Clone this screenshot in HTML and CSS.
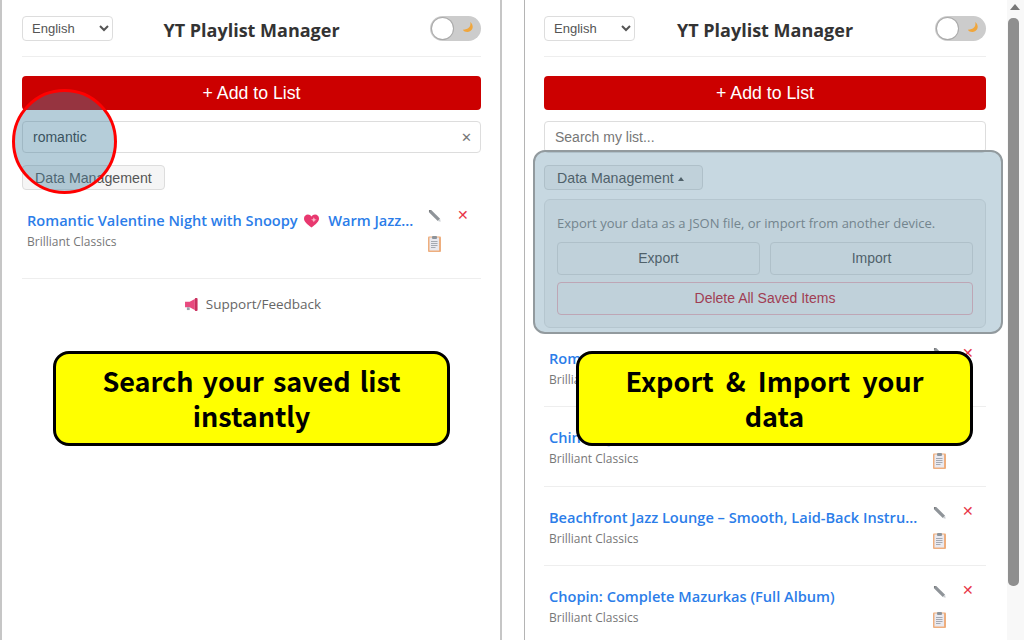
FILE: index.html
```html
<!DOCTYPE html>
<html lang="en">
<head>
<meta charset="UTF-8" />
<title>YT Playlist Manager</title>
<link rel="stylesheet" href="styles.css">
</head>
<body>
  <svg class="defs" width="0" height="0" aria-hidden="true">
    <symbol id="i-pencil" viewBox="0 0 14 14">
      <path d="M1 1.5 L3.5 1 L13 10.5 L10.5 13 L1 3.5 Z" fill="#8f9499"/>
      <path d="M1 1.5 L3 1 L1.4 3 Z" fill="#555"/>
      <path d="M10.5 13 L13 10.5 L13.6 13.6 Z" fill="#c8ccd0"/>
    </symbol>
    <symbol id="i-clip" viewBox="0 0 13 16">
      <rect x="0" y="0.5" width="13" height="15.5" rx="1" fill="#eeae7e"/>
      <rect x="1.5" y="1.5" width="9.5" height="13" fill="#e9e9f0"/>
      <rect x="4" y="0" width="5" height="3" rx="1" fill="#8d949b"/>
      <path d="M3 5.5h6.5M3 7.5h6.5M3 9.5h6.5M3 11.5h4.5" stroke="#a4a9b2" stroke-width="1"/>
    </symbol>
  </svg>

  <!-- SEARCH SHOT -->
  <section class="panel panel-left">
    <header class="top">
      <select class="lang"><option>English</option></select>
      <h1>YT Playlist Manager</h1>
      <div class="toggle">
        <span class="knob"></span>
        <svg class="moon" viewBox="0 0 14 14"><path d="M10 1 C11 6 8 9 2 9.5 C4 13 11 13 12.5 7.5 C13 5 12 2.5 10 1 Z" fill="#f0a63c"/></svg>
      </div>
    </header>
    <button class="add">+ Add to List</button>
    <div class="search">
      <input type="text" value="romantic" placeholder="Search my list..." />
      <span class="clear">&#10005;</span>
    </div>
    <button class="data-btn">Data Management</button>

    <div class="list">
      <div class="item">
        <div class="info">
          <a class="name">Romantic Valentine Night with Snoopy <svg class="emoji" viewBox="0 0 16 14"><path d="M8 14 C3 10 0 7.5 0 4.2 C0 1.8 1.9 0 4.2 0 C5.8 0 7.2 .8 8 2.2 C8.8 .8 10.2 0 11.8 0 C14.1 0 16 1.8 16 4.2 C16 7.5 13 10 8 14 Z" fill="#e8386f"/><path d="M10.5 3 l1 2 2 .6 -2 .8 -1 2 -1-2 -2-.8 2-.6 Z" fill="#fbb9c9"/></svg> Warm Jazz...</a>
          <div class="channel">Brilliant Classics</div>
        </div>
        <div class="actions">
          <svg class="ic-edit"><use href="#i-pencil"/></svg>
          <span class="del">&#10005;</span>
          <svg class="ic-clip"><use href="#i-clip"/></svg>
        </div>
      </div>
    </div>

    <div class="support">
      <svg class="horn" viewBox="0 0 15 14"><path d="M0 4h5L10.5 1v12L5 10H0Z" fill="#e84a7f"/><rect x="10.5" y="0" width="3" height="14" rx="1" fill="#c9305f"/><rect x="2" y="10" width="3" height="3" fill="#9aa3ad"/></svg>
      <span>Support/Feedback</span>
    </div>

    <div class="spot-circle"></div>
    <div class="callout callout-left">Search your saved list instantly</div>
  </section>

  <!-- EXPORT SHOT -->
  <section class="panel panel-right">
    <header class="top">
      <select class="lang"><option>English</option></select>
      <h1>YT Playlist Manager</h1>
      <div class="toggle">
        <span class="knob"></span>
        <svg class="moon" viewBox="0 0 14 14"><path d="M10 1 C11 6 8 9 2 9.5 C4 13 11 13 12.5 7.5 C13 5 12 2.5 10 1 Z" fill="#f0a63c"/></svg>
      </div>
    </header>
    <button class="add">+ Add to List</button>
    <div class="search">
      <input type="text" placeholder="Search my list..." />
    </div>
    <button class="data-btn">Data Management <span class="caret"></span></button>

    <div class="data-box">
      <p>Export your data as a JSON file, or import from another device.</p>
      <div class="data-row">
        <button>Export</button>
        <button>Import</button>
      </div>
      <button class="danger">Delete All Saved Items</button>
    </div>

    <div class="list">
      <div class="item">
        <div class="info">
          <a class="name">Romantic Valentine Night with Snoopy</a>
          <div class="channel">Brilliant Classics</div>
        </div>
        <div class="actions">
          <svg class="ic-edit"><use href="#i-pencil"/></svg>
          <span class="del">&#10005;</span>
          <svg class="ic-clip"><use href="#i-clip"/></svg>
        </div>
      </div>
      <div class="item">
        <div class="info">
          <a class="name">Chinese Jazz Lounge</a>
          <div class="channel">Brilliant Classics</div>
        </div>
        <div class="actions">
          <svg class="ic-edit"><use href="#i-pencil"/></svg>
          <span class="del">&#10005;</span>
          <svg class="ic-clip"><use href="#i-clip"/></svg>
        </div>
      </div>
      <div class="item">
        <div class="info">
          <a class="name">Beachfront Jazz Lounge – Smooth, Laid-Back Instru...</a>
          <div class="channel">Brilliant Classics</div>
        </div>
        <div class="actions">
          <svg class="ic-edit"><use href="#i-pencil"/></svg>
          <span class="del">&#10005;</span>
          <svg class="ic-clip"><use href="#i-clip"/></svg>
        </div>
      </div>
      <div class="item">
        <div class="info">
          <a class="name">Chopin: Complete Mazurkas (Full Album)</a>
          <div class="channel">Brilliant Classics</div>
        </div>
        <div class="actions">
          <svg class="ic-edit"><use href="#i-pencil"/></svg>
          <span class="del">&#10005;</span>
          <svg class="ic-clip"><use href="#i-clip"/></svg>
        </div>
      </div>
    </div>

    <div class="spot-box"></div>
    <div class="callout callout-right">Export &amp; Import your data</div>
  </section>

  <div class="scrollbar">
    <span class="arrow"></span>
    <span class="thumb"></span>
  </div>
</body>
</html>
```

FILE: styles.css
```css
:root {
  --ui: 'Open Sans', 'Noto Sans', sans-serif;
  --arial: 'Liberation Sans', Arial, sans-serif;
  --spot: rgba(70, 125, 155, 0.3);
}

* {
  box-sizing: border-box;
}

html,
body {
  margin: 0;
  height: 640px;
  overflow: hidden;
  background: #fff;
  font-family: var(--ui);
}

body {
  display: flex;
}

.defs {
  position: absolute;
}

/* ------------ PANELS ------------- */
.panel {
  position: relative;
  height: 640px;
  padding-top: 16px;
  overflow: hidden;
}
.panel-left {
  width: 502px;
  padding-left: 20px;
  padding-right: 19px;
  border-left: 2px solid #c6c6c6;
  border-right: 2px solid #c6c6c6;
}
.panel-right {
  width: 483px;
  margin-left: 22px;
  padding-left: 19px;
  padding-right: 21px;
  border-left: 1px solid #b4b4b4;
}

.top {
  display: grid;
  grid-template-columns: 1fr auto 1fr;
  align-items: center;
  height: 41px;
  padding-bottom: 15px;
  border-bottom: 1px solid #eee;
  margin-bottom: 19px;
}
.top h1 {
  margin: 3px 0 0;
  font-size: 18px;
  font-weight: 700;
  color: #333;
  line-height: 22px;
}
.lang {
  width: 91px;
  height: 25px;
  padding: 0 5px;
  background: #fff;
  border: 1px solid #ddd;
  border-radius: 4px;
  font-family: var(--arial);
  font-size: 13px;
  color: #555;
}
.toggle {
  position: relative;
  justify-self: end;
  width: 51px;
  height: 25px;
  background: #ccc;
  border-radius: 13px;
}
.knob {
  position: absolute;
  left: 2px;
  top: 2px;
  width: 21px;
  height: 21px;
  background: #fff;
  border-radius: 50%;
  box-shadow: 0 0 0 1px #aaa;
}
.moon {
  position: absolute;
  right: 7px;
  top: 5px;
  width: 13px;
  height: 13px;
}

.add {
  display: block;
  width: 100%;
  height: 34px;
  margin-bottom: 11px;
  padding: 1px 0 0;
  background: #cc0000;
  color: #fff;
  border: none;
  border-radius: 4px;
  font-family: var(--arial);
  font-size: 17.7px;
}

.search {
  position: relative;
  margin-bottom: 12px;
}
.search input {
  display: block;
  width: 100%;
  height: 32px;
  padding: 0 10px;
  border: 1px solid #ddd;
  border-radius: 4px;
  outline: none;
  font-family: var(--arial);
  font-size: 14px;
  color: #333;
}
.search input::placeholder { color: #777; }
.clear {
  position: absolute;
  right: 9px;
  top: 8px;
  font-size: 13px;
  line-height: 16px;
  color: #777;
}

.data-btn {
  display: block;
  height: 25px;
  padding: 0 12px;
  background: #f5f5f5;
  border: 1px solid #ddd;
  border-radius: 4px;
  font-family: var(--arial);
  font-size: 14.2px;
  color: #555;
}
.caret {
  display: inline-block;
  margin: 0 6px 0 0;
  vertical-align: 2px;
  border-left: 3px solid transparent;
  border-right: 3px solid transparent;
  border-bottom: 4px solid #555;
}

.data-box {
  margin-top: 9px;
  padding: 13px 12px 12px;
  background: #f6f6f6;
  border: 1px solid #e6e6e6;
  border-radius: 6px;
}
.data-box p {
  margin: 0 0 9px;
  font-size: 13px;
  line-height: 20px;
  color: #888;
}
.data-box button {
  height: 33px;
  padding: 0 0 2px;
  background: #f5f5f5;
  border: 1px solid #ddd;
  border-radius: 4px;
  font-family: var(--arial);
  font-size: 14px;
  color: #555;
}
.data-row {
  display: grid;
  grid-template-columns: 1fr 1fr;
  gap: 10px;
  margin-bottom: 7px;
}
.data-box .danger {
  display: block;
  width: 100%;
  border-color: #f2b8c0;
  color: #c82333;
}

/* ------------ LIST ------------- */
.item {
  display: flex;
  height: 79.3px;
  padding: 11px 3px 0 5px;
  border-bottom: 1px solid #eee;
}
.panel-left .list {
  padding-bottom: 9px;
  border-bottom: 1px solid #eee;
}
.panel-left .item {
  border-bottom: none;
}
.info {
  flex: 1;
  min-width: 0;
  padding-top: 8px;
}
.name {
  display: block;
  overflow: hidden;
  white-space: nowrap;
  font-size: 14.6px;
  font-weight: 600;
  line-height: 22px;
  color: #2b7de9;
}
.emoji {
  width: 15px;
  height: 14px;
  margin: 0 5px 0 3px;
  vertical-align: -2px;
}
.channel {
  margin-top: 2px;
  font-size: 12px;
  line-height: 18px;
  color: #777;
}
.actions {
  display: grid;
  grid-template-columns: 29px 29px;
  grid-auto-rows: 29px;
  place-items: center;
  align-self: flex-start;
}
.ic-edit { width: 13px; height: 13px; }
.ic-clip { width: 13px; height: 16px; margin-top: -1px; }
.del {
  margin: -2px 1px 0 0;
  font-size: 14px;
  line-height: 14px;
  color: #e8374a;
}

.support {
  display: flex;
  justify-content: center;
  align-items: center;
  gap: 7px;
  margin-top: 15px;
  padding-left: 3px;
  font-size: 13.5px;
  line-height: 20px;
  color: #666;
}
.horn { width: 14px; height: 13px; }

/* ------------ OVERLAYS ------------- */
.spot-circle {
  position: absolute;
  left: 10px;
  top: 89px;
  width: 105px;
  height: 105px;
  background: rgba(70, 130, 160, 0.4);
  border: 3px solid #f00;
  border-radius: 50%;
}
.spot-box {
  position: absolute;
  left: 8px;
  top: 150px;
  width: 470px;
  height: 184px;
  background: var(--spot);
  border: 2px solid #929a9e;
  border-radius: 12px;
}
.callout {
  position: absolute;
  top: 351px;
  width: 397px;
  height: 95px;
  display: flex;
  align-items: center;
  justify-content: center;
  text-align: center;
  padding: 0 30px 2px;
  background: #ff0;
  border: 3px solid #000;
  border-radius: 16px;
  font-family: 'Noto Sans CJK KR', 'Noto Sans', sans-serif;
  font-size: 27px;
  font-weight: 700;
  line-height: 35px;
  color: #000;
}
.callout-left { left: 51px; word-spacing: 3px; }
.callout-right { left: 51px; word-spacing: 6px; }

/* ------------ SCROLLBAR ------------- */
.scrollbar {
  flex: 1;
  position: relative;
  background: #f8f8f8;
}
.arrow {
  position: absolute;
  left: 3px;
  top: 4px;
  border-left: 5px solid transparent;
  border-right: 5px solid transparent;
  border-bottom: 6px solid #777;
}
.thumb {
  position: absolute;
  left: 1px;
  top: 18px;
  width: 11px;
  height: 568px;
  background: #8f8f8f;
  border-radius: 5px;
}
```
